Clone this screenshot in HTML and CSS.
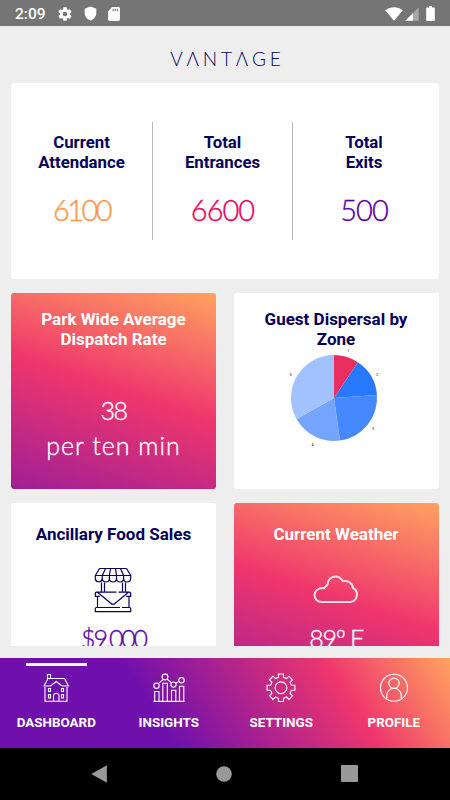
FILE: index.html
```html
<!DOCTYPE html>
<html lang="en">
<head>
    <meta charset="UTF-8">
    <meta name="viewport" content="width=device-width, initial-scale=1.0">
    <title>Vantage</title>
    <link rel="stylesheet" href="styles.css">
</head>
<body>
    <div class="status-bar">
        <span class="clock">2:09</span>
        <svg class="status-gear" width="16" height="16" viewBox="0 0 24 24"><path fill="#fff" fill-rule="evenodd" d="M19.4 13a7.500 7.500 0 0 0 0-2l2.100-1.650a.5.5 0 0 0 .12-.64l-2-3.460a.5.5 0 0 0-.61-.22l-2.490 1a7.300 7.300 0 0 0-1.690-.98l-.38-2.650A.49.49 0 0 0 14 2h-4a.49.49 0 0 0-.49.42l-.38 2.650c-.61.25-1.170.58-1.690.98l-2.490-1a.5.5 0 0 0-.61.22l-2 3.460a.5.5 0 0 0 .12.64L4.600 11a7.500 7.500 0 0 0 0 2l-2.110 1.650a.5.5 0 0 0-.12.64l2 3.460c.12.22.39.3.61.22l2.490-1c.52.4 1.080.73 1.690.98l.38 2.650c.03.24.24.4.49.4h4c.25 0 .46-.18.49-.42l.38-2.650a7.300 7.300 0 0 0 1.690-.98l2.490 1c.23.09.49 0 .61-.22l2-3.460a.5.5 0 0 0-.12-.64zM12 15.500a3.500 3.500 0 1 1 0-7 3.500 3.500 0 0 1 0 7z"/></svg>
        <svg class="status-shield" width="13" height="15" viewBox="0 0 13 15"><path fill="#fff" d="M6.500.5l5.800 2.200v4.500c0 3.300-2.500 6-5.800 7.300C3.200 13.200.7 10.500.7 7.200V2.700z"/></svg>
        <svg class="status-sd" width="12" height="14" viewBox="0 0 12 14"><path fill="#fff" d="M4.200 0h6.300c.8 0 1.400.6 1.400 1.400v11.200c0 .8-.6 1.400-1.400 1.400H1.500C.7 14 .1 13.400.1 12.600V4.200z"/><path stroke="#757575" stroke-width="1.100" d="M5.200 1.800v2.400M7.300 1.800v2.400M9.400 1.800v2.400"/></svg>
        <div class="status-right">
            <svg width="18" height="14" viewBox="0 0 18 14"><path fill="#fff" d="M.2 3.200C5.300-.9 12.700-.9 17.800 3.200L9 13.700z"/></svg>
            <svg width="14" height="14" viewBox="0 0 14 14"><path fill="#a9a9a9" d="M7.500 6.500L13.700.5v13.300H7.500z"/><path fill="#fff" d="M.3 13.800L8 6v7.800z"/></svg>
            <svg width="9" height="15" viewBox="0 0 9 15"><path fill="#fff" d="M3 0h3v1.500h1.800c.6 0 1 .4 1 1V14c0 .6-.4 1-1 1H1.200c-.6 0-1-.4-1-1V2.500c0-.6.4-1 1-1H3z"/></svg>
        </div>
    </div>

    <div class="logo" aria-label="Vantage">VΛNTΛGE</div>

    <div class="content">
        <div class="card totals">
            <div class="total attendance">
                <h2>Current<br>Attendance</h2>
                <p class="number">6100</p>
            </div>
            <div class="total entrances">
                <h2>Total<br>Entrances</h2>
                <p class="number">6600</p>
            </div>
            <div class="total exits">
                <h2>Total<br>Exits</h2>
                <p class="number">500</p>
            </div>
        </div>

        <div class="card gradient dispatch">
            <h2>Park Wide Average<br>Dispatch Rate</h2>
            <p class="rate">38</p>
            <p class="rate-unit">per ten min</p>
        </div>

        <div class="card dispersal">
            <h2>Guest Dispersal by<br>Zone</h2>
            <svg class="pie" width="100" height="102" viewBox="-50 -51 100 102">
                <path fill="#e92f60" d="M0 0V-43A43 43 0 0 1 23.900-35.700z"/>
                <path fill="#2979ff" d="M0 0L23.900-35.700A43 43 0 0 1 42.900-3z"/>
                <path fill="#4588ff" d="M0 0L42.900-3A43 43 0 0 1 6 42.600z"/>
                <path fill="#74a4ff" d="M0 0L6 42.600A43 43 0 0 1-37.500 21.100z"/>
                <path fill="#a2c2ff" d="M0 0L-37.500 21.100A43 43 0 0 1 0-43z"/>
                <text x="14.300" y="-46.500">1</text>
                <text x="43" y="-22.500">2</text>
                <text x="39" y="32">3</text>
                <text x="-21.500" y="47.500">4</text>
                <text x="-43.500" y="-22.500">5</text>
            </svg>
        </div>

        <div class="card single">
            <h2>Ancillary Food Sales</h2>
            <svg class="stall" width="38" height="46" viewBox="0 0 38 46" fill="none" stroke="#08005c" stroke-width="1.200" stroke-linejoin="round">
                <path d="M5.500 1.500h27l4.200 7v3.500a3.600 3.600 0 0 1-7.100 0 3.600 3.600 0 0 1-7.100 0 3.600 3.600 0 0 1-7.100 0 3.600 3.600 0 0 1-7.100 0 3.600 3.600 0 0 1-7 0V8.500z"/>
                <path d="M1.300 8.500h35.400M11.500 1.500L8.300 8.500V12M16.500 1.500l-1.100 7V12M21.500 1.500l1 7V12M26.500 1.500l3.100 7V12"/>
                <path d="M7.500 15.500v9.500M10.500 15.500v9.500M28.500 15.500v9.500M31.500 15.500v9.500"/>
                <path d="M22.500 25.200H2.500a1.200 1.200 0 0 0-1.200 1.200v3h4.500M24.500 25.200h11a1.200 1.200 0 0 1 1.200 1.200v3h-4.500M3.500 25.200L18 37.200h2L34.500 25.200M3.500 29.500v11M35 29.500v11M26 40.500H2.500a1.200 1.200 0 0 0-1.200 1.200v3h35.400v-3a1.200 1.200 0 0 0-1.200-1.200H28"/>
            </svg>
            <p class="number money">$9,000</p>
        </div>

        <div class="card gradient single">
            <h2>Current Weather</h2>
            <svg class="cloud" width="46" height="28" viewBox="0 0 46 28" fill="none" stroke="#e9dfe1" stroke-width="2" stroke-linejoin="round"><path d="M8.500 27h29A7.500 7.500 0 0 0 40 13C39.500 8 35 5.300 30 6.300 25-1.500 15.500.8 14.500 9.500L11.200 13.200C5 12.500 1.500 16.500 1.500 20 1.500 24 4.500 27 8.500 27z"/></svg>
            <p class="number degrees">89º F</p>
        </div>
    </div>

    <nav class="tabs">
        <a class="tab active">
            <svg width="28" height="30" viewBox="0 0 28 30">
                <path d="M3 14v14.300h22V14M2 13L6 5.500h16.500L26.500 13H20l-5.800-4.500L8.500 13zM5.500 6V1.500h3v4M11.500 28v-5.500a2.800 2.800 0 0 1 5.500 0V28M6.500 15.500h2v3h-2zM6.500 21.500h2v3.500h-2zM19.500 15.500h2v3h-2zM19.500 21.500h2v3.500h-2z"/>
            </svg>
            DASHBOARD
        </a>
        <a class="tab">
            <svg width="32" height="30" viewBox="0 0 32 30">
                <path d="M.5 28.400h31M1.700 28.400V18.500H6v9.900M9.800 28.400V10.300h4.500v18.100M18.500 28.400V17.200h4.300v11.200M26.500 28.400V13.300h4.300v15.100M5.300 10.700l5.100-4.400M14 6l4.500 4M22.500 10.500l3.200-2.100"/>
                <circle cx="3.500" cy="12.700" r="2.700"/><circle cx="12" cy="4" r="2.900"/><circle cx="20.500" cy="11.600" r="2.600"/><circle cx="28.500" cy="7.300" r="2.700"/>
            </svg>
            INSIGHTS
        </a>
        <a class="tab">
            <svg width="30" height="30" viewBox="0 0 30 30">
                <path d="M12.500 1h5v3.300l3 1.300 2.500-2.400 3.500 3.600-2.400 2.400 1.300 3.100h3.500v5h-3.500l-1.300 3.100 2.400 2.400-3.500 3.600-2.500-2.400-3 1.300v3.200h-5v-3.200l-3-1.300L7 26.400l-3.500-3.600 2.400-2.400-1.300-3.100H1.100v-5h3.500l1.300-3.100-2.400-2.400L7 3.200l2.500 2.400 3-1.300z"/>
                <circle cx="15" cy="14.800" r="5.900"/>
            </svg>
            SETTINGS
        </a>
        <a class="tab">
            <svg width="30" height="30" viewBox="0 0 30 30">
                <circle cx="15" cy="14.800" r="13.500"/><circle cx="15" cy="10.300" r="5.200"/>
                <path d="M7.800 26v-3.500a7.200 7.200 0 0 1 14.400 0V26"/>
            </svg>
            PROFILE
        </a>
    </nav>

    <div class="system-bar">
        <svg width="16" height="18" viewBox="0 0 16 18"><path fill="#999" d="M.3 9L15.900.2v17.600z"/></svg>
        <svg width="16" height="16" viewBox="0 0 16 16"><circle cx="8" cy="8" r="7.800" fill="#999"/></svg>
        <svg width="17" height="17" viewBox="0 0 17 17"><rect width="17" height="17" rx="1" fill="#999"/></svg>
    </div>
</body>
</html>
```
FILE: styles.css
```css
* {
    box-sizing: border-box;
}
body {
    margin: 0;
    width: 450px;
    height: 800px;
    overflow: hidden;
    display: flex;
    flex-direction: column;
    background-color: #eee;
    font-family: Roboto, sans-serif;
    color: #05005c;
}
svg {
    display: block;
    flex: none;
}
h2, p {
    margin: 0;
}
.status-bar {
    flex: none;
    height: 26px;
    padding: 1px 15px 0;
    display: flex;
    align-items: center;
    background-color: #757575;
    color: white;
}
.clock {
    width: 42px;
    padding-top: 1px;
    font-size: 15.500px;
    font-weight: 500;
}
.status-shield {
    margin-left: 11px;
}
.status-sd {
    margin-left: 11px;
}
.status-right {
    display: flex;
    align-items: center;
    gap: 2px;
    margin-left: auto;
}
.status-right svg:last-child {
    margin-left: 5px;
}
.logo {
    flex: none;
    height: 57px;
    padding: 10px 0 0 5px;
    line-height: 46px;
    text-align: center;
    font-family: Lato, sans-serif;
    font-size: 19px;
    font-weight: 300;
    letter-spacing: 3.800px;
}
.content {
    height: 563px;
    overflow: hidden;
    padding: 0 11.500px 0 11px;
    display: grid;
    grid-template-columns: 205px 205px;
    grid-template-rows: 196px 196px 196px;
    justify-content: space-between;
    row-gap: 14px;
    flex: none;
}
.card {
    border-radius: 3px;
    background-color: white;
    text-align: center;
}
.card h2 {
    font-size: 17px;
    line-height: 20px;
    font-weight: 700;
}
.card.gradient {
    background: linear-gradient(18.5deg, #9f1f96 0%, #ef366d 51%, #ffa35f 100%);
    color: white;
}
.number {
    font-family: Lato, sans-serif;
    font-weight: 300;
    font-size: 29px;
    line-height: 30px;
    letter-spacing: -1px;
    -webkit-text-stroke: 0.350px;
}
.totals {
    grid-column: 1 / 3;
    display: grid;
    grid-template-columns: 141px 140px 143px;
    padding: 39px 0;
}
.total {
    height: 118px;
    padding-top: 10px;
}
.total + .total {
    border-left: 1px solid #bbb;
}
.total h2 {
    font-size: 16.800px;
}
.total .number {
    margin-top: 23px;
}
.attendance .number {
    color: #ff9649;
    letter-spacing: -2.600px;
}
.entrances .number {
    color: #e8005a;
}
.exits .number {
    color: #5d00a5;
}
.dispatch,
.dispersal {
    padding-top: 16px;
}
.rate,
.rate-unit {
    font-family: Lato, sans-serif;
    font-weight: 300;
    font-size: 25px;
    line-height: 35px;
    -webkit-text-stroke: 0.350px;
}
.rate {
    margin-top: 44px;
    letter-spacing: -1.500px;
}
.rate-unit {
    letter-spacing: 1px;
}
.pie {
    margin: -2px 0 0 50.500px;
}
.pie text {
    font-size: 4px;
    fill: #222;
    text-anchor: middle;
}
.single {
    padding-top: 21px;
    display: flex;
    flex-direction: column;
    align-items: center;
}
.stall {
    margin-top: 23px;
    margin-right: 1px;
}
.cloud {
    margin-top: 31px;
}
.money {
    margin-top: 10px;
    font-size: 25px;
    letter-spacing: -2.200px;
    color: #5d00a5;
}
.degrees {
    margin-top: 20px;
    font-size: 25px;
    letter-spacing: -1.300px;
}
.tabs {
    flex: none;
    height: 90px;
    margin-top: 11.500px;
    display: grid;
    grid-template-columns: repeat(4, 1fr);
    background: linear-gradient(57deg, #6f10ac 35%, #ef366d 75%, #ffa35f 100%);
}
.tab {
    position: relative;
    padding-top: 15.500px;
    display: flex;
    flex-direction: column;
    align-items: center;
    gap: 11px;
    font-size: 13.400px;
    line-height: 18px;
    font-weight: 700;
    color: white;
}
.tab svg {
    fill: none;
    stroke: white;
    stroke-width: 1.100;
}
.tab.active::before {
    content: "";
    position: absolute;
    top: 5px;
    left: 26px;
    width: 61px;
    height: 3px;
    background-color: white;
}
.system-bar {
    flex: none;
    height: 53px;
    padding: 0 92px 1px 91px;
    display: flex;
    align-items: center;
    justify-content: space-between;
    background-color: black;
}
```
